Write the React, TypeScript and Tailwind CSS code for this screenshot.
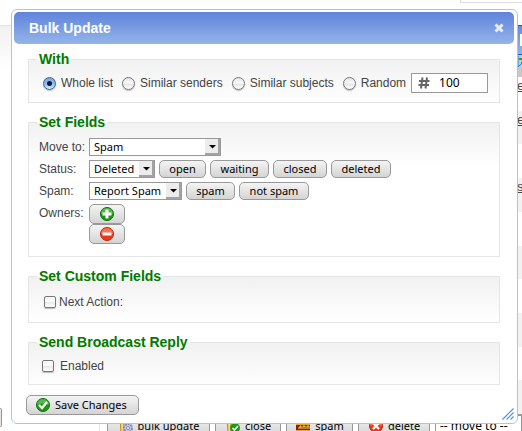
import type { ReactNode } from 'react';

const lucida = "font-['Noto_Sans','Open_Sans',sans-serif]";

function Section({ title, className, children }: { title: string; className: string; children: ReactNode }) {
  return (
    <fieldset
      className={`mx-0.5 min-w-0 border border-[#e5e5e5] bg-white bg-[linear-gradient(#f1f1f1,#ffffff)] bg-[length:100%_44px] bg-no-repeat px-2.5 ${className}`}
    >
      <legend className="-ml-0.5 bg-[linear-gradient(#ffffff_0_10px,transparent_10px)] px-0.5 text-[14px] leading-[18px] font-bold text-[#007a00]">
        {title}
      </legend>
      {children}
    </fieldset>
  );
}

function Radio({ label, checked }: { label: string; checked?: boolean }) {
  return (
    <label className="flex items-center gap-[5px] whitespace-nowrap">
      <input
        type="radio"
        name="scope"
        defaultChecked={checked}
        className="size-[13px] appearance-none rounded-full border border-[#777] bg-[linear-gradient(#e4e4e4,#fafafa_45%,#e6e6e6_55%,#ffffff)] shadow-[0_1px_1px_#bbb] checked:border-[#42618f] checked:bg-[radial-gradient(circle,#0c1c38_0_2px,transparent_3px),linear-gradient(#7fa5dc,#8db9ec_50%,#c9f0ff)]"
      />
      {label}
    </label>
  );
}

function Check({ label, gap, className }: { label: string; gap: string; className: string }) {
  return (
    <label className={`flex h-4 items-center ${gap} ${className}`}>
      <input
        type="checkbox"
        className="size-3 appearance-none rounded-[2px] border border-[#777] bg-[linear-gradient(#f6f6f6,#ffffff_45%,#e9e9e9_55%,#ffffff)] shadow-[0_1px_1px_#bbb] checked:bg-[#6fa4e4]"
      />
      {label}
    </label>
  );
}

function Dropdown({ id, value, width }: { id: string; value: string; width: string }) {
  return (
    <span className={`relative block h-[18px] shrink-0 ${width}`}>
      <select
        id={id}
        className={`block h-full w-full appearance-none border border-[#999] bg-white pr-4 pl-1 text-[11px] leading-4 text-black ${lucida}`}
      >
        <option>{value}</option>
      </select>
      <svg viewBox="0 0 15 16" className="pointer-events-none absolute top-px right-px h-4 w-[15px]">
        <path d="M0 0h15v16H0z" fill="#ececec" />
        <path d="M13 0h2v16H0v-2h13z" fill="#a3a3a3" />
        <path d="M4 6h7L7.500 9.500z" fill="#000" />
      </svg>
    </span>
  );
}

const buttonLook =
  'shrink-0 whitespace-nowrap border border-[#999] bg-[linear-gradient(#f4f4f4,#d4d4d4)] text-[11px] text-black';

function Chip({ label, width }: { label: string; width: string }) {
  return (
    <button type="button" className={`${buttonLook} ${lucida} ${width} h-[18px] rounded-[5px] leading-4`}>
      {label}
    </button>
  );
}

function RoundIcon({ kind }: { kind: 'plus' | 'minus' | 'check' | 'cross' }) {
  const green = kind === 'plus' || kind === 'check';
  return (
    <svg viewBox="0 0 16 16" className="size-4 shrink-0">
      <circle cx="8" cy="8" r="6.500" fill={green ? '#16980f' : '#e8391a'} stroke={green ? '#0b7208' : '#c32208'} />
      <path d="M2 8a6 6 0 0 1 12 0q-6-3-12 0z" fill={green ? '#54b84b' : '#fa7350'} />
      {kind === 'plus' && <path d="M6.500 3.500h3v3h3v3h-3v3h-3v-3h-3v-3h3z" fill="#fff" />}
      {kind === 'minus' && <path d="M3.500 6.500h9v3h-9z" fill="#fff" />}
      {kind === 'check' && <path d="M4 8l3 3 5-6" fill="none" stroke="#fff" strokeWidth="2.400" />}
      {kind === 'cross' && <path d="M5 5l6 6M11 5l-6 6" fill="none" stroke="#fff" strokeWidth="2.400" />}
    </svg>
  );
}

function TicketIcon({ done }: { done?: boolean }) {
  return (
    <svg viewBox="0 0 16 16" className="size-4 shrink-0">
      <path d="M2 1h4v13H3z" fill="#f6d775" stroke="#b98a1c" />
      {done ? (
        <>
          <circle cx="10" cy="10" r="5" fill="#1c9a17" />
          <path d="M7.500 10l2 2 3.500-4" fill="none" stroke="#fff" strokeWidth="1.600" />
        </>
      ) : (
        <>
          <circle cx="10" cy="10" r="4" fill="#c9cbe4" stroke="#8385b5" strokeWidth="2" strokeDasharray="2 1" />
          <circle cx="10" cy="10" r="1.500" fill="#fff" stroke="#8385b5" />
        </>
      )}
    </svg>
  );
}

function SpamIcon() {
  return (
    <svg viewBox="0 0 16 16" className="size-4 shrink-0">
      <path d="M1 3h14v11H1z" fill="#e6ad22" />
      <path d="M1 7h14v5H1z" fill="#8c1a0c" />
      <path d="M3 10h2V8h1v3M8 11V8h2v3M12 11V8h2v3" fill="none" stroke="#ffd95a" />
    </svg>
  );
}

function ToolbarButton({ icon, label, width }: { icon: ReactNode; label: string; width: string }) {
  return (
    <button
      type="button"
      className={`${buttonLook} ${lucida} ${width} flex h-[22px] items-center justify-center gap-1 rounded-[5px]`}
    >
      {icon}
      {label}
    </button>
  );
}

function Backdrop() {
  const rows = ['e', 'e', '', 's)', '', '', '', '', '', ''];
  return (
    <div className="flex h-full flex-col">
      <div className="ml-auto h-[3px] w-[62px] shrink-0 border-b border-l border-[#ddd]" />
      <div className="mt-[22px] flex min-h-0 flex-1">
        <aside className="flex w-[99px] shrink-0 flex-col border-t border-[#e2e2e2] bg-[linear-gradient(#f1f1f1,#ffffff)] bg-[length:100%_44px] bg-no-repeat">
          <div className="mt-[382px] h-[19px] w-0.5 shrink-0 rounded-r-[3px] border border-l-0 border-[#999] bg-[#e4e4e4]" />
        </aside>
        <main className="flex min-w-0 flex-1 flex-col border-l border-[#e5e5e5]">
          <div className="flex h-[30px] shrink-0 items-center justify-end border-y border-[#1660c8] bg-[linear-gradient(#668ae0,#93b4e6)]">
            <div className="h-3 w-0.5 bg-white" />
          </div>
          <div className="flex h-[22px] shrink-0 justify-end bg-[#c8c8c8]">
            <svg viewBox="0 0 5 14" className="h-3.5 w-[5px]">
              <path d="M1 1v11M1 12l3-3" stroke="#1688e0" fill="none" />
              <path d="M2 3h3v2H2zM4 7h1v2H4z" fill="#25a918" />
            </svg>
          </div>
          <div className="grid h-[337px] shrink-0 grid-rows-10">
            {rows.map((text, i) => (
              <div key={i} className="flex justify-end overflow-hidden odd:bg-white even:bg-[#f2f2f2]">
                <span className="w-[5px] text-[13px] leading-[18px] text-[#444] underline">{text}</span>
              </div>
            ))}
          </div>
          <div className="flex shrink-0 gap-[5px] border-t border-[#999] pl-[7px]">
            <ToolbarButton icon={<TicketIcon />} label="bulk update" width="w-[103px]" />
            <ToolbarButton icon={<TicketIcon done />} label="close" width="w-[66px]" />
            <ToolbarButton icon={<SpamIcon />} label="spam" width="w-[67px]" />
            <ToolbarButton icon={<RoundIcon kind="cross" />} label="delete" width="w-[72px]" />
            <select
              aria-label="Move to"
              className={`h-[22px] min-w-0 flex-1 appearance-none border border-[#999] bg-white pl-1 text-xs text-black ${lucida}`}
            >
              <option>-- move to --</option>
            </select>
          </div>
        </main>
      </div>
    </div>
  );
}

export default function App() {
  return (
    <div className="relative h-screen overflow-hidden bg-white font-['Liberation_Sans',Arial,sans-serif] text-xs text-[#444]">
      <Backdrop />
      <div
        role="dialog"
        aria-label="Bulk Update"
        className="absolute top-[9px] right-1 left-[11px] rounded-[6px] border border-[#a6c9e2] bg-white p-0.5 pr-[3px]"
      >
        <header className="flex h-8 items-center justify-between rounded-[5px] bg-[linear-gradient(#5f83dc,#94b5e8)] pr-2.5 pl-[15px]">
          <h1 className="text-[14px] leading-[18px] font-bold text-white">Bulk Update</h1>
          <button type="button" aria-label="Close">
            <svg viewBox="0 0 10 10" className="size-2.5">
              <path d="M1.500 1.500l7 7M8.500 1.500l-7 7" stroke="#e6eefb" strokeWidth="3" />
            </svg>
          </button>
        </header>

        <form className="flex flex-col gap-2.5 px-3 pt-1.5 pb-1.5">
          <Section title="With" className="pt-[5px] pb-[9px]">
            <div className="ml-1 flex h-5 items-center gap-[9px]">
              <Radio label="Whole list" checked />
              <Radio label="Similar senders" />
              <Radio label="Similar subjects" />
              <div className="flex items-center gap-[5px]">
                <Radio label="Random" />
                <span className="flex h-5 w-[77px] items-center border border-[#999] bg-white pl-1.5">
                  <svg viewBox="0 0 12 12" className="size-3 shrink-0">
                    <path d="M4.500 0.500L3 11.500M9 0.500L7.500 11.500M1 4h10.500M0.500 8h10.500" stroke="#666" strokeWidth="2" />
                  </svg>
                  <input
                    aria-label="Random count"
                    defaultValue="100"
                    className={`ml-[9px] w-9 min-w-0 bg-transparent text-xs text-black outline-none ${lucida}`}
                  />
                </span>
              </div>
            </div>
          </Section>

          <Section title="Set Fields" className="pt-[7px] pb-3">
            <div className="grid grid-cols-[50px_1fr] gap-y-1 leading-[18px]">
              <label htmlFor="move">Move to:</label>
              <Dropdown id="move" value="Spam" width="w-[132px]" />
              <label htmlFor="status">Status:</label>
              <div className="flex gap-1">
                <Dropdown id="status" value="Deleted" width="w-[66px]" />
                <Chip label="open" width="w-[47px]" />
                <Chip label="waiting" width="w-[59px]" />
                <Chip label="closed" width="w-[54px]" />
                <Chip label="deleted" width="w-[60px]" />
              </div>
              <label htmlFor="spam">Spam:</label>
              <div className="flex gap-1">
                <Dropdown id="spam" value="Report Spam" width="w-[93px]" />
                <Chip label="spam" width="w-[49px]" />
                <Chip label="not spam" width="w-[70px]" />
              </div>
              <span>Owners:</span>
              <div className="flex flex-col">
                <button type="button" aria-label="Add owner" className={`${buttonLook} flex h-5 w-9 items-center justify-center rounded-[5px]`}>
                  <RoundIcon kind="plus" />
                </button>
                <button type="button" aria-label="Remove owner" className={`${buttonLook} flex h-5 w-9 items-center justify-center rounded-[5px]`}>
                  <RoundIcon kind="minus" />
                </button>
              </div>
            </div>
          </Section>

          <Section title="Set Custom Fields" className="pt-[9px] pb-3">
            <Check label="Next Action:" gap="gap-[3px]" className="ml-[5px]" />
          </Section>

          <Section title="Send Broadcast Reply" className="pt-[7px] pb-2.5">
            <Check label="Enabled" gap="gap-1.5" className="ml-[3px]" />
          </Section>

          <button type="submit" className={`${buttonLook} ${lucida} flex h-5 w-[113px] items-center gap-1 rounded-[5px] pl-2`}>
            <RoundIcon kind="check" />
            Save Changes
          </button>
        </form>

        <svg viewBox="0 0 12 12" className="absolute right-[3px] bottom-[3px] size-3">
          <path d="M0.500 11.500l11-11M4.500 11.500l7-7M8.500 11.500l3-3" stroke="#4a94d4" strokeWidth="1.200" fill="none" />
        </svg>
      </div>
    </div>
  );
}
